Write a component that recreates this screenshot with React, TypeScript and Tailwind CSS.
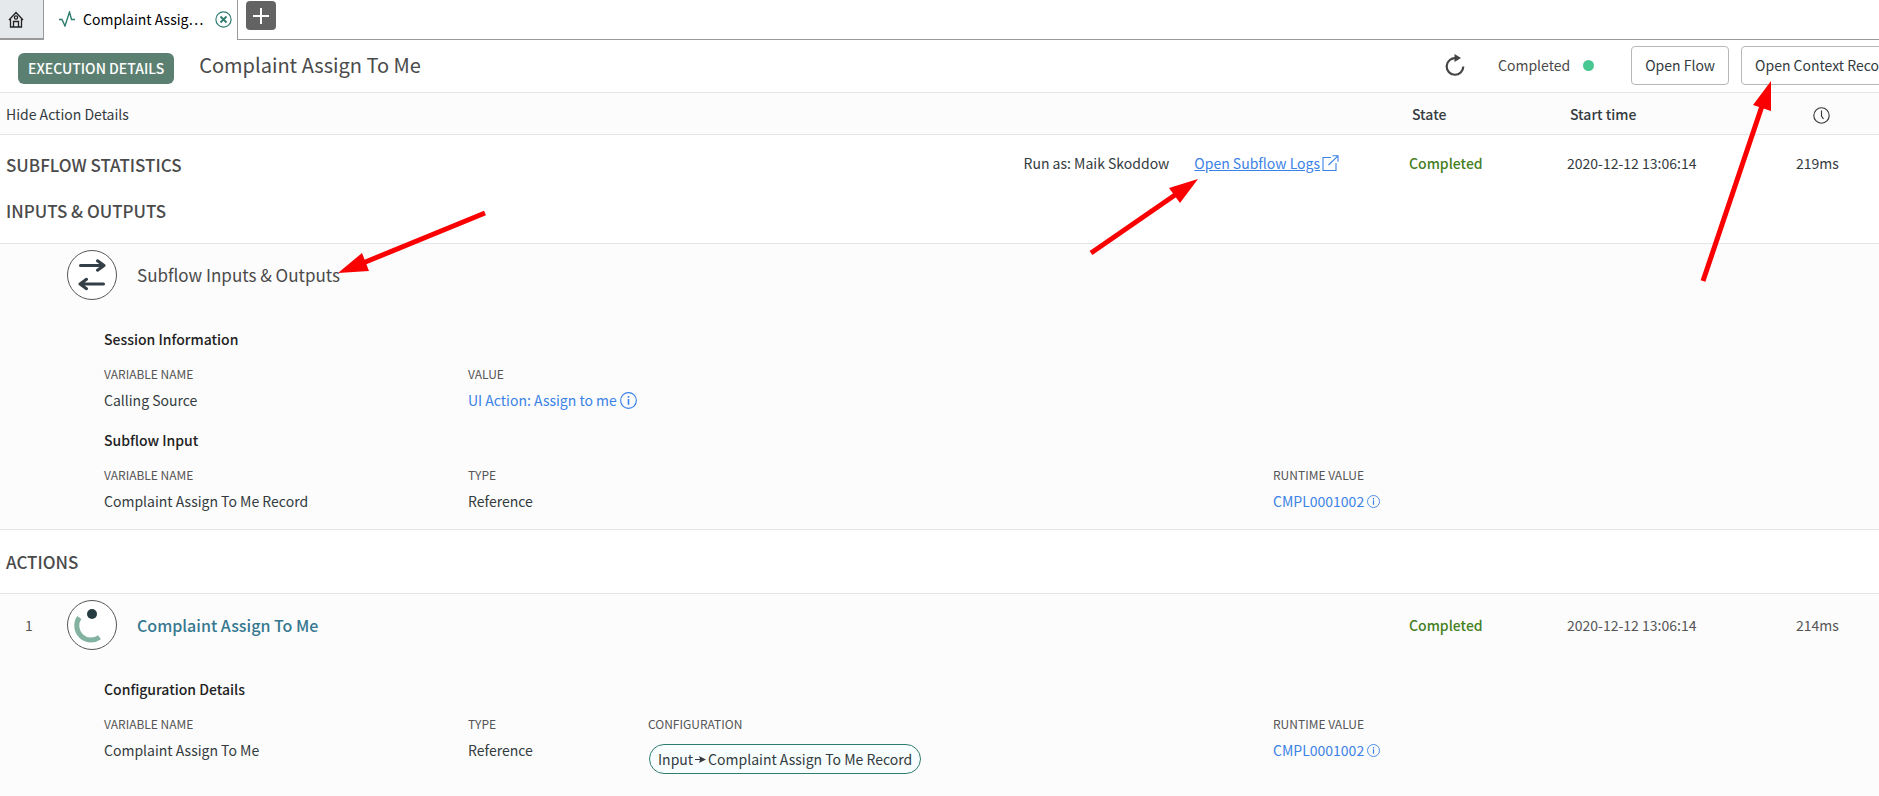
import type { ReactNode } from "react";

const summaryGrid =
  "grid grid-cols-[minmax(0,1fr)_158px_229px_83px] items-center";

function HomeIcon() {
  return (
    <svg width="16" height="17" viewBox="0 0 16 17" fill="none" stroke="#222" strokeWidth="1.3">
      <path d="M1 9 8 1.5 15 9M2.5 8v8h11V8M5.5 16v-5.5h5V16" />
      <circle cx="8" cy="6.5" r="1.6" />
    </svg>
  );
}

function PulseIcon() {
  return (
    <svg width="16" height="16" viewBox="0 0 16 16" fill="none" stroke="#2f7d6f" strokeWidth="1.4">
      <path d="M0 8.5h3l3 6.5 4.5-14 2 7.5H16" />
    </svg>
  );
}

function CloseIcon() {
  return (
    <svg width="17" height="17" viewBox="0 0 17 17" fill="none" stroke="#2f7d6f">
      <circle cx="8.5" cy="8.5" r="7.6" strokeWidth="1.2" />
      <path d="m5.5 5.5 6 6m0-6-6 6" strokeWidth="1.8" />
    </svg>
  );
}

function RefreshIcon() {
  return (
    <svg width="20" height="22" viewBox="0 0 20 22" fill="none" stroke="#444">
      <path d="M11 4.2A8.3 8.3 0 1 0 18.3 12.5" strokeWidth="2.2" />
      <path d="M9.5 0v8l6.5-4z" fill="#444" stroke="none" />
    </svg>
  );
}

function ClockIcon() {
  return (
    <svg width="17" height="17" viewBox="0 0 17 17" fill="none" stroke="#333" strokeWidth="1.1">
      <circle cx="8.5" cy="8.5" r="7.7" />
      <path d="M8.5 3.5v5.5l2 3" />
    </svg>
  );
}

function ExternalIcon() {
  return (
    <svg width="17" height="16" viewBox="0 0 17 16" fill="none" stroke="currentColor" strokeWidth="1.1">
      <path d="M9 2.5H1v13h13V8M6.5 10 16 .8M10.5.8H16v6" />
    </svg>
  );
}

function InfoIcon({ size }: { size: number }) {
  return (
    <svg width={size} height={size} viewBox="0 0 16 16" fill="none" stroke="currentColor">
      <circle cx="8" cy="8" r="7.4" strokeWidth="1.1" />
      <path d="M8 6.5V12M8 3.8v1.6" strokeWidth="1.5" />
    </svg>
  );
}

function SwapIcon() {
  return (
    <svg width="28" height="32" viewBox="0 0 28 32" fill="none" stroke="#333e46" strokeWidth="3" strokeLinecap="round" strokeLinejoin="round">
      <path d="M2.5 6.5H26M19.5 1.8l6.5 4.7-6.5 4.7" />
      <path d="M25.5 25H2M8.5 20.3 2 25l6.5 4.7" />
    </svg>
  );
}

function SubflowIcon() {
  return (
    <svg width="48" height="48" viewBox="0 0 48 48" fill="none">
      <circle cx="24" cy="13" r="5" fill="#263c42" />
      <path d="M11.3 16.5A14.3 14.3 0 0 0 31.5 36.2" stroke="#83b3a0" strokeWidth="5" />
    </svg>
  );
}

function CircleBadge({ children }: { children: ReactNode }) {
  return (
    <div className="flex size-[50px] shrink-0 items-center justify-center rounded-full border border-[#555] bg-white">
      {children}
    </div>
  );
}

function InfoLink({ label, size }: { label: string; size: number }) {
  return (
    <a href="#" className="inline-flex items-center gap-[3px] text-[#3b82e6]">
      {label}
      <InfoIcon size={size} />
    </a>
  );
}

type Column = { label: string; width: string; value: ReactNode };

function DetailTable({ title, columns }: { title: string; columns: Column[] }) {
  return (
    <section className="pl-[104px]">
      <h4 className="leading-6 font-medium text-[#222]">{title}</h4>
      <table className="mt-[11px] w-full table-fixed text-left">
        <thead>
          <tr className="text-[12px] leading-6 text-[#555]">
            {columns.map((c) => (
              <th key={c.label} className={`p-0 font-normal uppercase ${c.width}`}>
                {c.label}
              </th>
            ))}
          </tr>
        </thead>
        <tbody>
          <tr className="align-top text-[14px] leading-7">
            {columns.map((c) => (
              <td key={c.label} className="p-0">
                {c.value}
              </td>
            ))}
          </tr>
        </tbody>
      </table>
    </section>
  );
}

function Arrow({ className, width, height, line, head }: {
  className: string;
  width: number;
  height: number;
  line: string;
  head: string;
}) {
  return (
    <svg className={`pointer-events-none absolute ${className}`} width={width} height={height} aria-hidden="true">
      <path d={line} stroke="#fa0000" strokeWidth="5" />
      <polygon points={head} fill="#fa0000" />
    </svg>
  );
}

export default function App() {
  return (
    <div className="relative min-h-screen overflow-hidden bg-[#fcfcfc] font-['Noto_Sans_CJK_SC',sans-serif] text-[14px] leading-6 text-[#333b40]">
      <nav className="flex h-10 bg-white">
        <button aria-label="Home" className="flex w-11 items-center border-r border-b-2 border-[#999] bg-[#e6e9ec] pl-2">
          <HomeIcon />
        </button>
        <div className="flex w-[194px] items-center gap-2 border-r border-[#999] pb-[2px] pl-[15px] text-black">
          <PulseIcon />
          <span className="w-[124px] whitespace-nowrap">Complaint Assig…</span>
          <button aria-label="Close tab">
            <CloseIcon />
          </button>
        </div>
        <div className="flex-1 border-b border-[#999] pt-px pl-2">
          <button aria-label="New tab" className="flex h-[29px] w-[30px] items-center justify-center rounded bg-[#636363]">
            <svg width="16" height="16" viewBox="0 0 16 16" stroke="white" strokeWidth="2">
              <path d="M8 0v16M0 8h16" />
            </svg>
          </button>
        </div>
      </nav>

      <header className="flex h-[53px] items-center border-b border-[#e3e5e6] bg-white pb-[2px] pl-[18px]">
        <span className="mt-[6px] flex h-[31px] items-center rounded-md bg-[#5b7f71] px-[10px] font-medium whitespace-nowrap text-white">
          EXECUTION DETAILS
        </span>
        <h1 className="ml-[25px] flex-1 text-[20px] leading-8 whitespace-nowrap text-[#4a4a4a]">
          Complaint Assign To Me
        </h1>
        {/* the last button runs past the right edge */}
        <div className="-mr-7 flex shrink-0 items-center">
          <button aria-label="Refresh">
            <RefreshIcon />
          </button>
          <span className="ml-[33px] text-[#4a4a4a]">Completed</span>
          <span className="ml-[13px] size-[11px] rounded-full bg-[#49c792]" />
          <button className="ml-[37px] h-[39px] rounded border border-[#b4b8ba] px-[13px] whitespace-nowrap">
            Open Flow
          </button>
          <button className="ml-3 h-[39px] rounded border border-[#b4b8ba] px-[13px] whitespace-nowrap">
            Open Context Record
          </button>
        </div>
      </header>

      <div className={`${summaryGrid} h-[42px] border-b border-[#e3e5e6]`}>
        <button className="pl-[6px] text-left">Hide Action Details</button>
        <span className="pl-[3px] font-medium">State</span>
        <span className="pl-[3px] font-medium">Start time</span>
        <span className="pt-1 pl-[17px]">
          <ClockIcon />
        </span>
      </div>

      <div className="h-[109px] border-b border-[#e3e5e6] bg-white pt-3">
        <div className={summaryGrid}>
          <div className="flex items-center justify-between pl-[6px]">
            <h2 className="pt-1 text-[17px] leading-7 font-medium text-[#4a4a4a]">SUBFLOW STATISTICS</h2>
            <div className="flex pr-[70px]">
              <span>Run as: Maik Skoddow</span>
              <a href="#" className="ml-[25px] flex items-center gap-[2px] text-[#3b82e6] underline">
                Open Subflow Logs
                <ExternalIcon />
              </a>
            </div>
          </div>
          <span className="font-medium text-[#47801f]">Completed</span>
          <span>2020-12-12 13:06:14</span>
          <span>219ms</span>
        </div>
        <h2 className="mt-[18px] pl-[6px] text-[17px] leading-7 font-medium text-[#4a4a4a]">INPUTS &amp; OUTPUTS</h2>
      </div>

      <div className="h-[286px] border-b border-[#e3e5e6] pt-[6px]">
        <div className="flex items-center pl-[67px]">
          <CircleBadge>
            <SwapIcon />
          </CircleBadge>
          <h3 className="ml-5 text-[17px] text-[#4a4a4a]">Subflow Inputs &amp; Outputs</h3>
        </div>
        <div className="flex flex-col gap-[14px] pt-[27px]">
          <DetailTable
            title="Session Information"
            columns={[
              { label: "Variable Name", width: "w-[364px]", value: "Calling Source" },
              { label: "Value", width: "", value: <InfoLink label="UI Action: Assign to me" size={17} /> },
            ]}
          />
          <DetailTable
            title="Subflow Input"
            columns={[
              { label: "Variable Name", width: "w-[364px]", value: "Complaint Assign To Me Record" },
              { label: "Type", width: "", value: "Reference" },
              { label: "Runtime Value", width: "w-[606px]", value: <InfoLink label="CMPL0001002" size={13} /> },
            ]}
          />
        </div>
      </div>

      <div className="flex h-16 items-center border-b border-[#e3e5e6] bg-white pl-[6px]">
        <h2 className="text-[17px] leading-7 font-medium text-[#4a4a4a]">ACTIONS</h2>
      </div>

      <div className="pt-[6px]">
        <div className={`${summaryGrid} text-[#555]`}>
          <div className="flex items-center">
            <span className="w-[67px] pl-[25px]">1</span>
            <CircleBadge>
              <SubflowIcon />
            </CircleBadge>
            <a href="#" className="ml-5 text-[16px] font-medium text-[#35788f]">
              Complaint Assign To Me
            </a>
          </div>
          <span className="font-medium text-[#47801f]">Completed</span>
          <span>2020-12-12 13:06:14</span>
          <span>214ms</span>
        </div>
        <div className="pt-[27px]">
          <DetailTable
            title="Configuration Details"
            columns={[
              { label: "Variable Name", width: "w-[364px]", value: "Complaint Assign To Me" },
              { label: "Type", width: "w-[180px]", value: "Reference" },
              {
                label: "Configuration",
                width: "",
                value: (
                  <span className="mt-2 ml-px inline-flex h-[30px] items-center rounded-full border border-[#2f7d6f] bg-[#f8fefe] px-2">
                    Input
                    <svg width="13" height="7" viewBox="0 0 13 7" className="mx-px" fill="#333b40">
                      <path d="M1 3h5L5 0l7 3.5L5 7l1-3H1z" />
                    </svg>
                    Complaint Assign To Me Record
                  </span>
                ),
              },
              { label: "Runtime Value", width: "w-[606px]", value: <InfoLink label="CMPL0001002" size={13} /> },
            ]}
          />
        </div>
      </div>

      <Arrow
        className="top-[210px] left-[335px]"
        width={154}
        height={66}
        line="M150 3 28 53"
        head="3,63 27,43 34,61"
      />
      <Arrow
        className="top-[176px] right-[678px]"
        width={113}
        height={82}
        line="M3 77 87 19"
        head="110,3 81,12 92,27"
      />
      <Arrow
        className="top-[78px] right-[104px]"
        width={75}
        height={208}
        line="M3 203 62 28"
        head="71,3 53,27 71,33"
      />
    </div>
  );
}
